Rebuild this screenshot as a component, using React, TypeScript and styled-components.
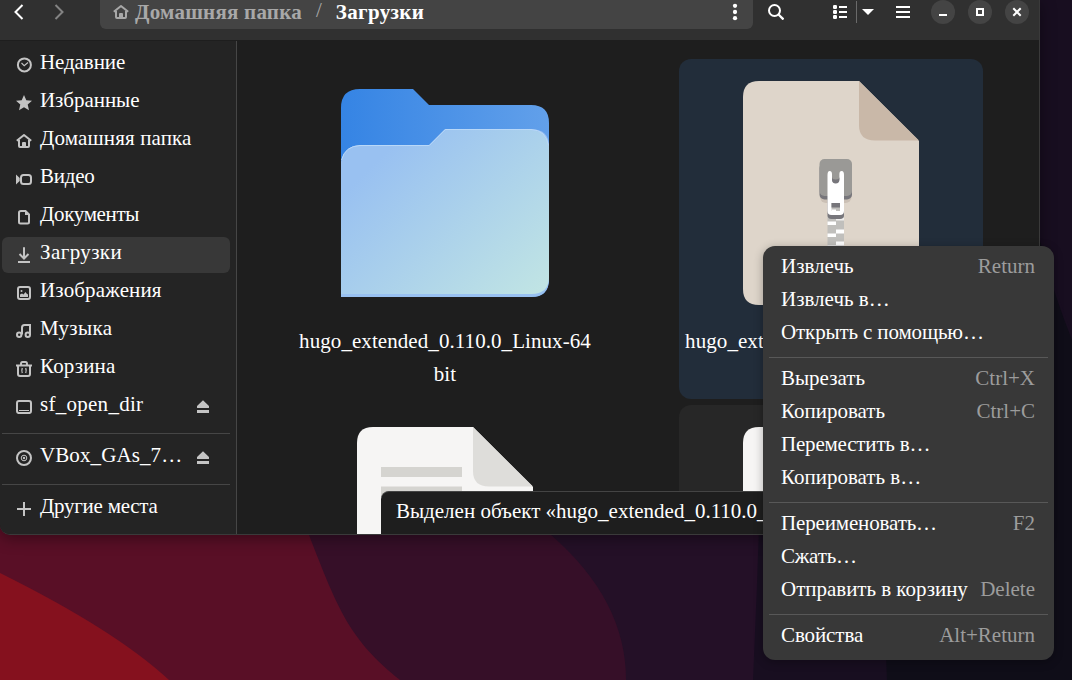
import React from "react";
import styled, { createGlobalStyle, css } from "styled-components";

const Global = createGlobalStyle`
  body { margin: 0; background: #0f0c18; }
  *, *::before, *::after { box-sizing: border-box; }
`;

const Desktop = styled.div`
  position: relative;
  width: 1072px;
  height: 680px;
  overflow: hidden;
  font-family: "Liberation Serif", serif;
  font-size: 21px;
  line-height: 33px;
  color: #fff;
`;

const Wallpaper = styled.svg`
  position: absolute;
  inset: 0;
`;

const Window = styled.main`
  position: absolute;
  left: 0;
  top: 0;
  width: 1040px;
  height: 535px;
  display: flex;
  flex-direction: column;
  overflow: hidden;
  background: #1e1e1e;
  border: solid #3a3a3a;
  border-width: 0 1px 1px 0;
  border-radius: 0 0 0 10px;
  box-shadow: 0 3px 16px rgba(0, 0, 0, 0.4);
`;

const HeaderBar = styled.header`
  display: flex;
  align-items: flex-start;
  flex: none;
  height: 41px;
  background: #303030;
  border-bottom: 1px solid #1e1e1e;
`;

const IconButton = styled.button<{ $w: number; $dim?: boolean }>`
  display: flex;
  justify-content: center;
  align-items: center;
  width: ${(p) => p.$w}px;
  height: 24px;
  padding: 0;
  border: 0;
  background: none;
  color: ${(p) => (p.$dim ? "#838383" : "#fff")};
`;

const PathBar = styled.nav`
  display: flex;
  align-items: center;
  width: 653px;
  height: 29px;
  margin-left: 20px;
  padding: 0 9px 5px 13px;
  background: #444;
  border-radius: 0 0 6px 6px;
  font-weight: bold;
  line-height: 24px;
`;

const Crumb = styled.span<{ $current?: boolean }>`
  display: flex;
  align-items: center;
  gap: 6px;
  color: ${(p) => (p.$current ? "#fff" : "#a8a8a8")};
  letter-spacing: ${(p) => (p.$current ? 0.35 : 0.23)}px;
  white-space: nowrap;
`;

const Slash = styled.span`
  margin: -4px 14px 0 14px;
  color: #a8a8a8;
  font-weight: normal;
`;

const Spacer = styled.span`
  flex: 1;
`;

const ViewDivider = styled.span`
  width: 1px;
  height: 22px;
  margin-top: 1px;
  background: #6a6a6a;
`;

const WindowControls = styled.div`
  display: flex;
  gap: 13px;
  margin: 0 10px 0 5px;
`;

const WindowButton = styled.button`
  display: flex;
  align-items: center;
  justify-content: center;
  width: 24px;
  height: 24px;
  padding: 0;
  border: 0;
  border-radius: 50%;
  background: #444;
  color: #fff;
`;

const Body = styled.div`
  display: flex;
  flex: 1;
  min-height: 0;
`;

const Sidebar = styled.aside`
  display: flex;
  flex-direction: column;
  gap: 2px;
  flex: none;
  width: 237px;
  padding: 6px 6px 0 2px;
  background: #242424;
  border-right: 1px solid #464646;
`;

const Place = styled.div<{ $active?: boolean }>`
  display: flex;
  align-items: center;
  height: 36px;
  padding: 0 21px 0 14px;
  border-radius: 6px;
  background: ${(p) => (p.$active ? "#383838" : "transparent")};
  color: #c4c4c4;
`;

const PlaceName = styled.span<{ $tracking?: number }>`
  flex: 1;
  margin: -5px 0 0 8px;
  color: #fff;
  letter-spacing: ${(p) => p.$tracking ?? 0}px;
  white-space: nowrap;
`;

const PlaceRule = styled.hr`
  width: 100%;
  height: 1px;
  margin: 6px 0 4px;
  border: 0;
  background: #464646;
`;

const Files = styled.section`
  display: grid;
  grid-template-columns: 304px 304px;
  grid-auto-rows: 340px;
  column-gap: 82px;
  row-gap: 6px;
  padding: 18px 0 0 56px;
`;

const File = styled.article<{ $state?: "selected" | "hover" }>`
  display: flex;
  flex-direction: column;
  align-items: center;
  padding: 6px;
  border-radius: 12px;
  ${(p) => p.$state === "selected" && css`background: #222d3a;`}
  ${(p) => p.$state === "hover" && css`background: #272727;`}
`;

const FileName = styled.div`
  margin-top: 4px;
  letter-spacing: 0.07px;
  text-align: center;
  white-space: pre;
`;

const StatusBar = styled.div`
  position: absolute;
  right: 0;
  bottom: 0;
  width: 658px;
  height: 43px;
  padding: 3px 15px;
  border-top: 1px solid #444;
  border-radius: 8px 0 0 0;
  background: #1e1e1e;
  white-space: nowrap;
`;

const Menu = styled.div`
  position: absolute;
  left: 763px;
  top: 246px;
  width: 291px;
  height: 414px;
  padding: 4px 6px 0;
  border-radius: 12px;
  background: #383838;
  box-shadow: 0 2px 10px rgba(0, 0, 0, 0.3);
`;

const MenuItem = styled.div`
  display: flex;
  justify-content: space-between;
  height: 33px;
  padding: 0 13px 0 12px;
  white-space: nowrap;
`;

const MenuLabel = styled.span<{ $tracking?: number }>`
  letter-spacing: ${(p) => p.$tracking ?? 0}px;
`;

const Shortcut = styled.span`
  color: #9c9c9c;
`;

const MenuRule = styled.hr`
  height: 1px;
  margin: 8px 0 4px;
  border: 0;
  background: #585858;
`;

const GlyphSvg = styled.svg`
  flex: none;
`;

const Glyph = ({ children, size = 16 }: { children: React.ReactNode; size?: number }) => (
  <GlyphSvg width={size} height={size} viewBox="0 0 16 16" fill="none" stroke="currentColor" strokeWidth="2">
    {children}
  </GlyphSvg>
);

const Home = () => (
  <Glyph>
    <path d="M.8 7.800 8 2l7.200 5.800M3 7v6a1 1 0 0 0 1 1h8a1 1 0 0 0 1-1V7" strokeLinejoin="round" />
    <path d="M6 13.500V10q0-1 1-1h2q1 0 1 1v3.500z" fill="currentColor" stroke="none" />
  </Glyph>
);

const icons: Record<string, React.ReactNode> = {
  recent: (
    <Glyph>
      <circle cx="8.400" cy="7.900" r="6.500" />
      <path d="m5.500 6 2.700 2.700L12 5.500" strokeWidth="1.100" />
    </Glyph>
  ),
  star: (
    <Glyph>
      <path d="m8 0 2.300 5.300 5.700.5-4.300 3.800 1.300 5.700-5-3-5 3 1.300-5.700L0 5.800l5.700-.5z" fill="currentColor" stroke="none" />
    </Glyph>
  ),
  home: <Home />,
  video: (
    <Glyph>
      <rect x="5" y="4" width="10" height="9" rx="2.500" />
      <path d="M0 3.500 3.700 7v3L0 13.500z" fill="currentColor" stroke="none" />
    </Glyph>
  ),
  document: (
    <Glyph>
      <path d="M5 2h4.500L13 5.500V13a1.500 1.500 0 0 1-1.500 1.500h-7A1.500 1.500 0 0 1 3 13V3.500Q3 2 5 2z" />
      <path d="M9 2v4h4z" fill="currentColor" stroke="none" />
    </Glyph>
  ),
  download: (
    <Glyph>
      <path d="M8 .300v10.700M3.500 7 8 11.500 12.500 7M2 15h12" />
    </Glyph>
  ),
  picture: (
    <Glyph>
      <rect x="2" y="2" width="12" height="12" rx="2" />
      <path d="M4 12V9.500l2-1 1.500 1 2-2.500 1 1.500 1.500 1V12z" fill="currentColor" stroke="none" />
      <circle cx="5.500" cy="6" r="1" fill="currentColor" stroke="none" />
    </Glyph>
  ),
  music: (
    <Glyph>
      <circle cx="3.200" cy="11.800" r="2.200" />
      <circle cx="11.800" cy="11.800" r="2.200" />
      <path d="M6 11.500V4.500Q6 2 8.500 2H14v10" />
    </Glyph>
  ),
  trash: (
    <Glyph>
      <path d="M0 4.500h16M5 4V3Q5 1 6.500 1h3Q11 1 11 3v1M2 5v8q0 2 2 2h8q2 0 2-2V5" />
      <path d="M6.300 7q-1 2.500 0 5M9.700 7q1 2.500 0 5" strokeWidth="1.300" />
    </Glyph>
  ),
  drive: (
    <Glyph>
      <rect x="1" y="2" width="14" height="12" rx="2" />
      <path d="M3 11.500h10" strokeWidth="1" />
      <path d="M2 14h12" />
    </Glyph>
  ),
  disc: (
    <Glyph>
      <circle cx="8" cy="8" r="7" />
      <circle cx="8" cy="8" r="2.800" strokeWidth="1" />
      <circle cx="8" cy="8" r="1.200" fill="currentColor" stroke="none" />
    </Glyph>
  ),
  plus: (
    <Glyph>
      <path d="M8 1v14M1 8h14" />
    </Glyph>
  ),
};

const Eject = () => (
  <GlyphSvg width="12" height="14" viewBox="0 0 12 14" fill="currentColor">
    <path d="M6 .3 12 6v1.500q0 .5-.5.500h-11Q0 8 0 7.500V6zM0 10h12v3H0z" />
  </GlyphSvg>
);

type PlaceRow = { icon: string; name: string; tracking?: number; active?: boolean; eject?: boolean; ruleBefore?: boolean };
const places: PlaceRow[] = [
  { icon: "recent", name: "Недавние", tracking: -0.1 },
  { icon: "star", name: "Избранные", tracking: -0.05 },
  { icon: "home", name: "Домашняя папка", tracking: 0.14 },
  { icon: "video", name: "Видео", tracking: -0.25 },
  { icon: "document", name: "Документы", tracking: -0.33 },
  { icon: "download", name: "Загрузки", tracking: 0.4, active: true },
  { icon: "picture", name: "Изображения", tracking: 0.15 },
  { icon: "music", name: "Музыка", tracking: 0.35 },
  { icon: "trash", name: "Корзина", tracking: 0.17 },
  { icon: "drive", name: "sf_open_dir", tracking: 0.27, eject: true },
  { icon: "disc", name: "VBox_GAs_7…", tracking: 0.1, eject: true, ruleBefore: true },
  { icon: "plus", name: "Другие места", tracking: -0.26, ruleBefore: true },
];

type Action = { label: string; keys?: string; tracking?: number };
const menuGroups: Action[][] = [
  [
    { label: "Извлечь", keys: "Return" },
    { label: "Извлечь в…" },
    { label: "Открыть с помощью…", tracking: -0.14 },
  ],
  [
    { label: "Вырезать", keys: "Ctrl+X" },
    { label: "Копировать", keys: "Ctrl+C" },
    { label: "Переместить в…", tracking: -0.2 },
    { label: "Копировать в…" },
  ],
  [
    { label: "Переименовать…", keys: "F2", tracking: -0.15 },
    { label: "Сжать…", tracking: -0.2 },
    { label: "Отправить в корзину", keys: "Delete", tracking: -0.03 },
  ],
  [{ label: "Свойства", keys: "Alt+Return", tracking: -0.1 }],
];

const FolderArt = () => (
  <svg width="256" height="256" viewBox="0 0 256 256">
    <defs>
      <linearGradient id="back" x1="0" y1="0" x2="1" y2="0">
        <stop offset="0" stopColor="#3584e4" />
        <stop offset="1" stopColor="#62a0ea" />
      </linearGradient>
      <linearGradient id="front" gradientUnits="userSpaceOnUse" x1="66" y1="90" x2="210" y2="240">
        <stop offset="0" stopColor="#99c1f1" />
        <stop offset="1" stopColor="#c0e4e4" />
      </linearGradient>
    </defs>
    <path d="M24 232V43q0-19 19-19h53l16 16h102q18 0 18 18v156q0 18-18 18z" fill="url(#back)" />
    <path d="M24 232V97q3-16 19-17h69l16-16h87q17 1 17 17v133q0 18-18 18z" fill="#99c1f1" />
    <path d="M24 229V98q3-17 19-17h69.500l16-16H214q16 1 18 17v130q0 17-18 17z" fill="url(#front)" />
    <path d="M24.500 95q3.500-14 18.500-14.500h69.300l16-16H214q15 .5 17.500 16" fill="none" stroke="#b9d8f8" strokeWidth="1" />
  </svg>
);

const Sheet = ({ paper, fold, children }: { paper: string; fold: string; children?: React.ReactNode }) => (
  <svg width="256" height="256" viewBox="0 0 256 256">
    <path d="M40 224V32q0-16 16-16h100l60 60v148q0 16-16 16H56q-16 0-16-16z" fill={paper} />
    <path d="M156 16v44q0 15.500 16 15.500h44z" fill={fold} />
    {children}
  </svg>
);

const Zipper = () => (
  <g>
    <rect x="124.500" y="150" width="16.500" height="78" fill="#c0bfbc" />
    {[0, 1, 2, 3, 4, 5].map((i) => (
      <g key={i} fill="#fff">
        <rect x="124.500" y={156.5 + i * 12} width="8.500" height="3.500" />
        <rect x="133" y={164.5 + i * 12} width="8" height="4" />
      </g>
    ))}
    <rect x="133" y="152.500" width="8" height="3" fill="#f0efee" />
    <rect x="117" y="98" width="31.500" height="40" rx="6" fill="#cbc0b5" />
    <rect x="116.500" y="98" width="32.500" height="36.500" rx="5" fill="#77767b" />
    <rect x="116.500" y="94" width="32.500" height="37" rx="5" fill="#9a9996" />
    <path d="M124.500 132h16.500v18q0 4-4 4h-8.500q-4 0-4-4z" fill="#77767b" />
    <path d="M124.500 110q0-4 2.200-4t2.300 3v5q0 4 3.700 4t3.700-4v-5q0-3 2.300-3t2.300 4v36q0 4-4 4h-8.500q-4 0-4-4z" fill="#fff" />
    <path d="M129 112q0 2.500 3.700 2.500t3.700-2.500v2.500q0 4-3.700 4t-3.700-4z" fill="#77767b" />
    <rect x="128.500" y="138" width="8.500" height="8" fill="#c0bfbc" />
    <rect x="128.500" y="138" width="8.500" height="4.500" fill="#77767b" />
    <rect x="128.500" y="144.500" width="4.500" height="2" fill="#fff" />
  </g>
);

export default function App() {
  return (
    <>
      <Global />
      <Desktop>
        <Wallpaper width="1072" height="680" viewBox="0 0 1072 680">
          <path d="M0 0h1072v680H0z" fill="#180e20" />
          <path d="M887 680Q887 660 884 640L1040 240Q1052 290 1072 340V680z" fill="#0f0d18" />
          <path d="M1040 0h32v335Q1056 290 1040 240z" fill="#180e20" />
          <path d="M0 500h760q-3 90-7 180H0z" fill="#241027" />
          <path d="M0 500H510L551 535Q626 600 626 680H0z" fill="#360f28" />
          <path d="M0 500H295L309 535C338 610 350 640 400 680H0z" fill="#590f26" />
          <path d="M0 573Q115 630 169 680H0z" fill="#85111e" />
        </Wallpaper>

        <Window>
          <HeaderBar>
            <IconButton $w={38} aria-label="Назад">
              <Glyph><path d="M11.500 1 4.500 8l7 7" /></Glyph>
            </IconButton>
            <IconButton $w={42} $dim aria-label="Вперёд">
              <Glyph><path d="m4.500 1 7 7-7 7" /></Glyph>
            </IconButton>
            <PathBar>
              <Crumb>
                <Home />
                Домашняя папка
              </Crumb>
              <Slash>/</Slash>
              <Crumb $current>Загрузки</Crumb>
              <Spacer />
              <Glyph size={18}>
                <g fill="currentColor" stroke="none">
                  <circle cx="8" cy="2.500" r="1.900" />
                  <circle cx="8" cy="8" r="1.900" />
                  <circle cx="8" cy="13.500" r="1.900" />
                </g>
              </Glyph>
            </PathBar>
            <IconButton $w={46} aria-label="Поиск">
              <Glyph>
                <circle cx="6.500" cy="6.500" r="5.500" />
                <path d="m10.500 10.500 5 5" strokeWidth="2.300" />
              </Glyph>
            </IconButton>
            <Spacer />
            <IconButton $w={32} aria-label="Вид">
              <Glyph>
                <path d="M7 3h8M7 8h8M7 13h8" />
                <g fill="currentColor" stroke="none">
                  <rect x="1" y="1" width="4" height="4" rx="1.200" />
                  <rect x="1" y="6" width="4" height="4" rx="1.200" />
                  <rect x="1" y="11" width="4" height="4" rx="1.200" />
                </g>
              </Glyph>
            </IconButton>
            <ViewDivider />
            <IconButton $w={22} aria-label="Параметры вида">
              <svg width="12" height="6"><path d="M0 0h12L6 6z" fill="currentColor" /></svg>
            </IconButton>
            <IconButton $w={47} aria-label="Меню">
              <Glyph><path d="M1 3h14M1 8h14M1 13h14" /></Glyph>
            </IconButton>
            <WindowControls>
              <WindowButton aria-label="Свернуть">
                <Glyph><path d="M4 11h8" /></Glyph>
              </WindowButton>
              <WindowButton aria-label="Развернуть">
                <Glyph><path d="M5 5h6v6H5z" /></Glyph>
              </WindowButton>
              <WindowButton aria-label="Закрыть">
                <Glyph><path d="m4.300 4.300 7.400 7.400M11.700 4.300l-7.400 7.400" /></Glyph>
              </WindowButton>
            </WindowControls>
          </HeaderBar>

          <Body>
            <Sidebar>
              {places.map((p) => (
                <React.Fragment key={p.name}>
                  {p.ruleBefore && <PlaceRule />}
                  <Place $active={p.active}>
                    {icons[p.icon]}
                    <PlaceName $tracking={p.tracking}>{p.name}</PlaceName>
                    {p.eject && <Eject />}
                  </Place>
                </React.Fragment>
              ))}
            </Sidebar>
            <Files>
              <File>
                <FolderArt />
                <FileName>{"hugo_extended_0.110.0_Linux-64\nbit"}</FileName>
              </File>
              <File $state="selected">
                <Sheet paper="#ded5ca" fold="#c9b8a8"><Zipper /></Sheet>
                <FileName>hugo_extended_0.110.0_Linux-64</FileName>
              </File>
              <File>
                <Sheet paper="#f6f5f4" fold="#deddda">
                  <path d="M64 56h81v10H64zM64 75.500h81v10H64z" fill="#d5d4d0" />
                </Sheet>
              </File>
              <File $state="hover">
                <Sheet paper="#f6f5f4" fold="#deddda" />
              </File>
            </Files>
          </Body>
          <StatusBar>Выделен объект «hugo_extended_0.110.0_</StatusBar>
        </Window>

        <Menu>
          {menuGroups.map((group, i) => (
            <React.Fragment key={i}>
              {i > 0 && <MenuRule />}
              {group.map((a) => (
                <MenuItem key={a.label}>
                  <MenuLabel $tracking={a.tracking}>{a.label}</MenuLabel>
                  {a.keys && <Shortcut>{a.keys}</Shortcut>}
                </MenuItem>
              ))}
            </React.Fragment>
          ))}
        </Menu>
      </Desktop>
    </>
  );
}
